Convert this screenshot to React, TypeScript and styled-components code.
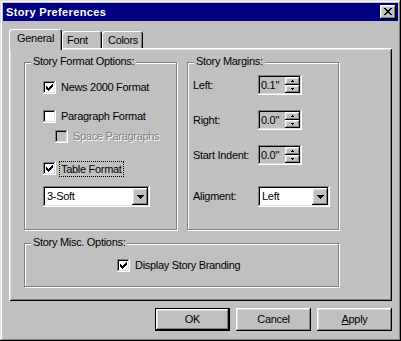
import React from "react";
import styled, { createGlobalStyle, css } from "styled-components";

const GlobalStyle = createGlobalStyle`
  html, body { margin: 0; padding: 0; background: #c0c0c0; }
  body {
    font-family: "Liberation Sans", Arial, sans-serif;
    font-size: 11px;
    line-height: 13px;
    letter-spacing: -0.3px;
    color: #000;
  }
  * { box-sizing: border-box; }
`;

const raisedBevel = css`
  box-shadow: inset -1px -1px 0 #000, inset 1px 1px 0 #fff,
    inset -2px -2px 0 #808080, inset 2px 2px 0 #dfdfdf;
`;

const sunkenBevel = css`
  box-shadow: inset -1px -1px 0 #fff, inset 1px 1px 0 #808080,
    inset -2px -2px 0 #dfdfdf, inset 2px 2px 0 #000;
`;

const Window = styled.div`
  width: 401px;
  height: 341px;
  padding: 3px;
  background: #c0c0c0;
  display: flex;
  flex-direction: column;
  box-shadow: inset -1px -1px 0 #000, inset 1px 1px 0 #dfdfdf,
    inset -2px -2px 0 #808080, inset 2px 2px 0 #fff;
`;

const TitleBar = styled.div`
  height: 18px;
  flex: none;
  background: #000080;
  display: flex;
  align-items: center;
  justify-content: space-between;
  padding: 0 2px 0 3px;
`;

const TitleText = styled.span`
  color: #fff;
  font-weight: bold;
  letter-spacing: 0.35px;
  white-space: nowrap;
`;

const CloseButton = styled.button`
  width: 16px;
  height: 14px;
  padding: 0 0 1px 0;
  border: 0;
  background: #c0c0c0;
  ${raisedBevel};
  display: flex;
  align-items: center;
  justify-content: center;
`;

const Body = styled.div`
  flex: 1;
  display: flex;
  flex-direction: column;
  padding: 8px 6px 7px;
`;

const TabStrip = styled.div`
  display: flex;
  align-items: flex-end;
  height: 19px;
  position: relative;
  z-index: 1;
`;

const Tab = styled.div<{ $active?: boolean; $w: number; $pl: number }>`
  width: ${(p) => p.$w}px;
  height: ${(p) => (p.$active ? 21 : 17)}px;
  margin-bottom: ${(p) => (p.$active ? -2 : 0)}px;
  padding: 3px 0 0 ${(p) => p.$pl}px;
  background: #c0c0c0;
  border-radius: 3px 3px 0 0;
  white-space: nowrap;
  box-shadow: inset 1px 1px 0 #fff, inset -1px 0 0 #000, inset -2px 0 0 #808080;
`;

const Panel = styled.div`
  height: 253px;
  padding: 14px 15px;
  display: grid;
  grid-template-columns: 153px 152px;
  grid-template-rows: 168px 44px;
  column-gap: 10px;
  row-gap: 13px;
  box-shadow: inset 1px 1px 0 #fff, inset -1px -1px 0 #000,
    inset 2px 2px 0 #dfdfdf, inset -2px -2px 0 #808080;
`;

const GroupBox = styled.div<{ $span?: boolean }>`
  position: relative;
  border: 1px solid #808080;
  box-shadow: inset 1px 1px 0 #fff, 1px 1px 0 #fff;
  ${(p) => p.$span && "grid-column: 1 / -1;"}
`;

const GroupTitle = styled.span`
  position: absolute;
  top: -8px;
  left: 6px;
  padding: 0 2px;
  background: #c0c0c0;
  white-space: nowrap;
`;

const FormatOptions = styled.div`
  display: flex;
  flex-direction: column;
  align-items: flex-start;
  padding: 18px 0 0 18px;
`;

const MiscOptions = styled.div`
  display: flex;
  padding: 15px 0 0 92px;
`;

const CheckRow = styled.div<{ $mt?: number; $indent?: number }>`
  display: flex;
  align-items: center;
  gap: 5px;
  height: 13px;
  margin-top: ${(p) => p.$mt || 0}px;
  margin-left: ${(p) => p.$indent || 0}px;
`;

const CheckBox = styled.span<{ $disabled?: boolean }>`
  width: 13px;
  height: 13px;
  flex: none;
  background: ${(p) => (p.$disabled ? "#c0c0c0" : "#fff")};
  ${sunkenBevel};
  display: flex;
  align-items: center;
  justify-content: center;
`;

const Label = styled.span<{ $disabled?: boolean; $focused?: boolean }>`
  white-space: nowrap;
  ${(p) =>
    p.$disabled &&
    css`
      color: #808080;
      text-shadow: 1px 1px 0 #fff;
    `}
  ${(p) =>
    p.$focused &&
    css`
      border: 1px dotted #000;
      padding: 0 1px;
      margin-left: -2px;
      line-height: 14px;
    `}
`;

const Combo = styled.div<{ $w: number; $mt?: number }>`
  width: ${(p) => p.$w}px;
  height: 21px;
  flex: none;
  margin-top: ${(p) => p.$mt || 0}px;
  background: #fff;
  padding: 2px;
  display: flex;
  align-items: center;
  ${sunkenBevel};
`;

const ComboText = styled.span`
  flex: 1;
  padding-left: 2px;
  white-space: nowrap;
`;

const ComboButton = styled.span`
  width: 16px;
  height: 17px;
  background: #c0c0c0;
  ${raisedBevel};
  display: flex;
  align-items: center;
  justify-content: center;
`;

const MarginsBody = styled.div`
  display: flex;
  flex-direction: column;
  padding: 12px 0 0 5px;
`;

const MarginRow = styled.div<{ $mt?: number }>`
  display: flex;
  align-items: center;
  margin-top: ${(p) => p.$mt || 0}px;
`;

const FieldLabel = styled.span`
  width: 65px;
  flex: none;
  white-space: nowrap;
`;

const SpinField = styled.div`
  width: 44px;
  height: 20px;
  padding: 2px;
  background: #c0c0c0;
  display: flex;
  ${sunkenBevel};
`;

const SpinText = styled.span`
  flex: 1;
  padding-left: 1px;
  line-height: 16px;
  white-space: nowrap;
`;

const SpinButtons = styled.div`
  width: 15px;
  display: flex;
  flex-direction: column;
`;

const SpinButton = styled.span`
  flex: 1;
  background: #c0c0c0;
  ${raisedBevel};
  display: flex;
  align-items: center;
  justify-content: center;
`;

const ButtonRow = styled.div`
  display: flex;
  justify-content: flex-end;
  gap: 6px;
  margin-top: 7px;
`;

const PushButton = styled.button<{ $default?: boolean }>`
  width: 75px;
  height: 23px;
  padding: 0;
  border: 0;
  background: #c0c0c0;
  color: #000;
  font: inherit;
  letter-spacing: inherit;
  ${(p) =>
    p.$default
      ? css`
          box-shadow: inset 0 0 0 1px #000, inset -2px -2px 0 #000,
            inset 2px 2px 0 #fff, inset -3px -3px 0 #808080,
            inset 3px 3px 0 #dfdfdf;
        `
      : raisedBevel};
  u { text-decoration: underline; }
`;

const Pixels: React.FC<{ rows: string[]; color?: string }> = ({ rows, color = "#000" }) => {
  const w = rows[0].length;
  const h = rows.length;
  return (
    <svg width={w} height={h} viewBox={`0 0 ${w} ${h}`} shapeRendering="crispEdges" style={{ display: "block" }}>
      {rows.flatMap((r, y) =>
        r.split("").map((c, x) =>
          c === "#" ? <rect key={`${x}-${y}`} x={x} y={y} width={1} height={1} fill={color} /> : null
        )
      )}
    </svg>
  );
};

const CHECK = ["......#", ".....##", "#...###", "##.###.", "#####..", ".###...", "..#...."];
const CLOSE_X = ["##....##", ".##..##.", "..####..", "...##...", "..####..", ".##..##.", "##....##"];
const DOWN = ["#######", ".#####.", "..###..", "...#..."];
const SMALL_UP = [".#.", "###"];
const SMALL_DOWN = ["###", ".#."];

const Check: React.FC<{ checked?: boolean; disabled?: boolean }> = ({ checked, disabled }) => (
  <CheckBox $disabled={disabled}>{checked && <Pixels rows={CHECK} />}</CheckBox>
);

const Dropdown: React.FC<{ value: string; width: number; mt?: number }> = ({ value, width, mt }) => (
  <Combo $w={width} $mt={mt}>
    <ComboText>{value}</ComboText>
    <ComboButton>
      <Pixels rows={DOWN} />
    </ComboButton>
  </Combo>
);

const Spin: React.FC<{ value: string }> = ({ value }) => (
  <SpinField>
    <SpinText>{value}</SpinText>
    <SpinButtons>
      <SpinButton>
        <Pixels rows={SMALL_UP} />
      </SpinButton>
      <SpinButton>
        <Pixels rows={SMALL_DOWN} />
      </SpinButton>
    </SpinButtons>
  </SpinField>
);

export default function App() {
  return (
    <>
      <GlobalStyle />
      <Window>
        <TitleBar>
          <TitleText>Story Preferences</TitleText>
          <CloseButton aria-label="Close">
            <Pixels rows={CLOSE_X} />
          </CloseButton>
        </TitleBar>
        <Body>
          <TabStrip>
            <Tab $active $w={53} $pl={8}>General</Tab>
            <Tab $w={40} $pl={5}>Font</Tab>
            <Tab $w={41} $pl={6}>Colors</Tab>
          </TabStrip>
          <Panel>
            <GroupBox>
              <GroupTitle>Story Format Options:</GroupTitle>
              <FormatOptions>
                <CheckRow>
                  <Check checked />
                  <Label>News 2000 Format</Label>
                </CheckRow>
                <CheckRow $mt={16}>
                  <Check />
                  <Label>Paragraph Format</Label>
                </CheckRow>
                <CheckRow $mt={7} $indent={12}>
                  <Check disabled />
                  <Label $disabled>Space Paragraphs</Label>
                </CheckRow>
                <CheckRow $mt={19}>
                  <Check checked />
                  <Label $focused>Table Format</Label>
                </CheckRow>
                <Dropdown value="3-Soft" width={107} mt={11} />
              </FormatOptions>
            </GroupBox>
            <GroupBox>
              <GroupTitle>Story Margins:</GroupTitle>
              <MarginsBody>
                <MarginRow>
                  <FieldLabel>Left:</FieldLabel>
                  <Spin value={'0.1"'} />
                </MarginRow>
                <MarginRow $mt={15}>
                  <FieldLabel>Right:</FieldLabel>
                  <Spin value={'0.0"'} />
                </MarginRow>
                <MarginRow $mt={15}>
                  <FieldLabel>Start Indent:</FieldLabel>
                  <Spin value={'0.0"'} />
                </MarginRow>
                <MarginRow $mt={21}>
                  <FieldLabel>Aligment:</FieldLabel>
                  <Dropdown value="Left" width={72} />
                </MarginRow>
              </MarginsBody>
            </GroupBox>
            <GroupBox $span>
              <GroupTitle>Story Misc. Options:</GroupTitle>
              <MiscOptions>
                <CheckRow>
                  <Check checked />
                  <Label>Display Story Branding</Label>
                </CheckRow>
              </MiscOptions>
            </GroupBox>
          </Panel>
          <ButtonRow>
            <PushButton $default>OK</PushButton>
            <PushButton>Cancel</PushButton>
            <PushButton>
              <u>A</u>pply
            </PushButton>
          </ButtonRow>
        </Body>
      </Window>
    </>
  );
}
